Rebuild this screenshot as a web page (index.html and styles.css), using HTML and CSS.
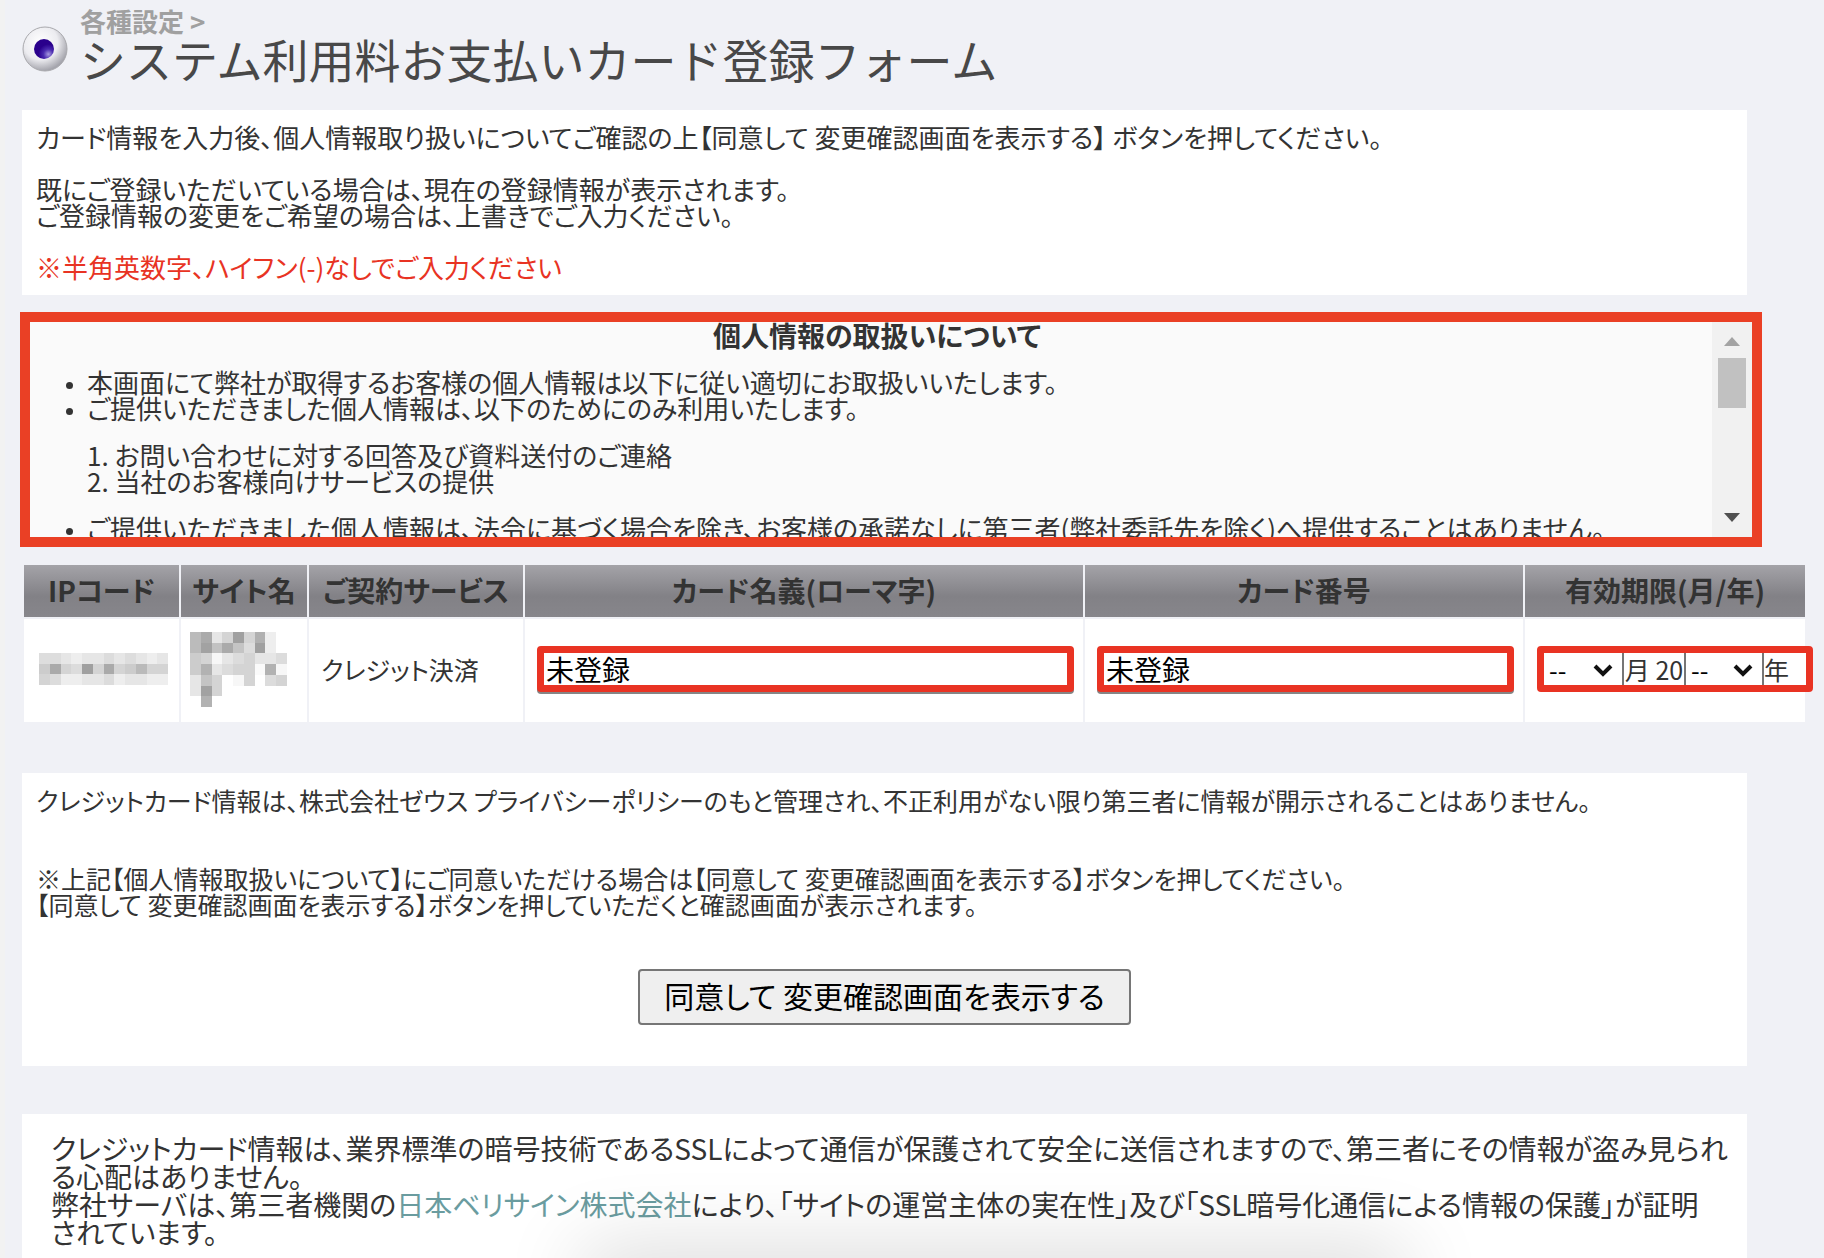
FILE: index.html
```html
<!DOCTYPE html>
<html lang="ja">
<head>
  <meta charset="UTF-8">
  <meta name="viewport" content="width=device-width, initial-scale=1.0">
  <title>システム利用料お支払いカード登録フォーム</title>
  <link rel="stylesheet" href="styles.css">
</head>
<body>
  <header class="page-header">
    <svg class="page-icon" viewBox="0 0 46 46" aria-hidden="true">
      <defs>
        <radialGradient id="ball" cx="40%" cy="35%" r="65%">
          <stop offset="0" stop-color="#ffffff"/>
          <stop offset="0.6" stop-color="#ececf0"/>
          <stop offset="1" stop-color="#a4a4ac"/>
        </radialGradient>
        <radialGradient id="pupil" cx="72%" cy="76%" r="50%">
          <stop offset="0" stop-color="#a89ae0"/>
          <stop offset="0.5" stop-color="#4a2ab0"/>
          <stop offset="1" stop-color="#2a008c"/>
        </radialGradient>
      </defs>
      <circle cx="23" cy="23" r="22" fill="url(#ball)" stroke="#a9a9ad"/>
      <circle cx="22" cy="23" r="10" fill="url(#pupil)"/>
    </svg>
    <div>
      <p class="breadcrumb">各種設定 &gt;</p>
      <h1>システム利用料お支払いカード登録フォーム</h1>
    </div>
  </header>

  <form>
    <section class="panel">
      カード情報を入力後、個人情報取り扱いについてご確認の上【同意して 変更確認画面を表示する】 ボタンを押してください。<br>
      <br>
      既にご登録いただいている場合は、現在の登録情報が表示されます。<br>
      ご登録情報の変更をご希望の場合は、上書きでご入力ください。<br>
      <br>
      <span class="notice">※半角英数字、ハイフン(-)なしでご入力ください</span>
    </section>

    <section class="policy">
      <div class="policy-text">
        <h2>個人情報の取扱いについて</h2>
        <ul>
          <li>本画面にて弊社が取得するお客様の個人情報は以下に従い適切にお取扱いいたします。</li>
          <li>ご提供いただきました個人情報は、以下のためにのみ利用いたします。
            <ol>
              <li>お問い合わせに対する回答及び資料送付のご連絡</li>
              <li>当社のお客様向けサービスの提供</li>
            </ol>
          </li>
          <li>ご提供いただきました個人情報は、法令に基づく場合を除き、お客様の承諾なしに第三者(弊社委託先を除く)へ提供することはありません。</li>
        </ul>
      </div>
      <div class="scrollbar" aria-hidden="true">
        <span class="arrow-up"></span>
        <span class="thumb"></span>
        <span class="arrow-down"></span>
      </div>
    </section>

    <table class="cards">
      <thead>
        <tr>
          <th class="col-ip">IPコード</th>
          <th class="col-site">サイト名</th>
          <th class="col-service">ご契約サービス</th>
          <th><label for="holder">カード名義(ローマ字)</label></th>
          <th class="col-number"><label for="number">カード番号</label></th>
          <th class="col-expiry">有効期限(月/年)</th>
        </tr>
      </thead>
      <tbody>
        <tr>
          <td><svg class="mosaic mosaic-ip" id="mosaic-ip" viewBox="0 0 12 3" preserveAspectRatio="none"></svg></td>
          <td><svg class="mosaic mosaic-site" id="mosaic-site" viewBox="0 0 9 7" preserveAspectRatio="none"></svg></td>
          <td>クレジット決済</td>
          <td><input class="marked" type="text" id="holder" value="未登録"></td>
          <td><input class="marked" type="text" id="number" value="未登録"></td>
          <td>
            <div class="marked expiry">
              <div class="select">
                <select aria-label="月"><option>--</option></select>
                <svg viewBox="0 0 22 14" aria-hidden="true"><path d="M3 3l8 8 8-8"/></svg>
              </div>
              <span class="month">月 20</span>
              <div class="select">
                <select aria-label="年"><option>--</option></select>
                <svg viewBox="0 0 22 14" aria-hidden="true"><path d="M3 3l8 8 8-8"/></svg>
              </div>
              <span>年</span>
            </div>
          </td>
        </tr>
      </tbody>
    </table>

    <section class="panel confirm">
      クレジットカード情報は、株式会社ゼウス プライバシーポリシーのもと管理され、不正利用がない限り第三者に情報が開示されることはありません。<br>
      <br>
      <br>
      ※上記【個人情報取扱いについて】にご同意いただける場合は【同意して 変更確認画面を表示する】ボタンを押してください。<br>
      【同意して 変更確認画面を表示する】ボタンを押していただくと確認画面が表示されます。
      <div class="actions">
        <button type="submit">同意して 変更確認画面を表示する</button>
      </div>
    </section>
  </form>

  <section class="panel ssl">
    クレジットカード情報は、業界標準の暗号技術であるSSLによって通信が保護されて安全に送信されますので、第三者にその情報が盗み見られる心配はありません。<br>
    弊社サーバは、第三者機関の<a href="#">日本ベリサイン株式会社</a>により、「サイトの運営主体の実在性」及び「SSL暗号化通信による情報の保護」が証明<span class="nowrap">されています。</span>
  </section>

  <div class="bottom-shadow"></div>

  <script>
    // grey levels of the masked cells, "--" is left empty
    const masks = {
      'mosaic-ip': [
        'dd dd e6 ee e6 e6 dc e6 dd e6 ee e6',
        'cc aa d4 dc a0 d4 aa d4 cc ba d4 d4',
        'd4 dc ee ee e6 e6 dc ee e6 e6 ee ee',
      ],
      'mosaic-site': [
        'bb aa e6 d4 a0 d4 b0 ee --',
        'bb a2 c2 aa c4 dc a0 ee --',
        'cc d4 f7 e6 dc d4 e6 e6 dc',
        'cc b2 e6 dc d4 d4 fa b2 f7',
        'e6 c4 d4 -- f7 d4 -- dc d4',
        'e6 a2 d4 -- -- -- -- -- --',
        '-- b2 -- -- -- -- -- -- --',
      ],
    };

    for (const id in masks) {
      let cells = '';
      masks[id].forEach((row, y) => {
        row.split(' ').forEach((c, x) => {
          if (c !== '--') {
            cells += `<rect x="${x}" y="${y}" width="1" height="1" fill="#${c}${c}${c}"/>`;
          }
        });
      });
      document.getElementById(id).innerHTML = cells;
    }
  </script>
</body>
</html>
```
FILE: styles.css
```css
* {
  box-sizing: border-box;
}

body {
  margin: 0;
  padding: 8px 17px 0 17px;
  border-left: 5px solid #f2f2f2;
  min-height: 100vh;
  display: flex;
  flex-direction: column;
  overflow: hidden;
  background-color: #f0f1f6;
  color: #333;
  font-family: "Noto Sans CJK JP", sans-serif;
  font-feature-settings: "palt";
  font-size: 26px;
  line-height: 26px;
}

.page-header {
  display: flex;
  gap: 12px;
  height: 102px;
}

.page-icon {
  width: 46px;
  height: 46px;
  margin-top: 18px;
}

.breadcrumb {
  margin: 0;
  color: #a0a0a0;
  font-weight: bold;
}

h1 {
  margin: 0;
  color: #484848;
  font-size: 46px;
  font-weight: 400;
  line-height: 48px;
  font-feature-settings: normal;
}

.panel {
  margin-right: 60px;
  padding: 14px 14px 15px;
  background-color: #fff;
}

.notice {
  color: #e83323;
}

.policy {
  display: flex;
  height: 235px;
  margin: 17px 45px 16px -2px;
  border: 10px solid #ea4025;
  background-color: #fafafa;
}

.policy-text {
  flex: 1;
  overflow: hidden;
}

.policy h2 {
  margin: 0 0 21px;
  padding-left: 12px;
  font-size: 28px;
  line-height: 26px;
  text-align: center;
}

.policy ul {
  margin: 0;
  padding-left: 57px;
}

.policy ul > li::marker {
  font-size: 18px;
}

.policy ol {
  margin: 21px 0;
  padding-left: 0;
  list-style-position: inside;
}

.policy ol > li::marker {
  font-size: 26px;
}

.scrollbar {
  display: flex;
  flex-direction: column;
  align-items: center;
  width: 40px;
  padding: 15px 0;
  background-color: #f1f1f1;
}

.arrow-up {
  border: 8px solid transparent;
  border-top: 0;
  border-bottom: 9px solid #a3a3a3;
}

.thumb {
  width: 28px;
  height: 50px;
  margin: 12px 0 auto;
  background-color: #c1c1c1;
}

.arrow-down {
  border: 8px solid transparent;
  border-bottom: 0;
  border-top: 9px solid #505050;
}

.cards {
  width: 100%;
  table-layout: fixed;
  border-spacing: 2px;
  margin-bottom: 49px;
}

.cards th {
  height: 52px;
  padding: 0 0 2px;
  background: linear-gradient(#a4a3a8, #828186 60%, #87868b);
  font-size: 28px;
}

.cards td {
  height: 103px;
  padding: 0 12px 3px;
  background-color: #fff;
  font-size: 25px;
}

.col-ip {
  width: 155px;
}

.col-site {
  width: 126px;
}

.col-service {
  width: 214px;
}

.col-number {
  width: 438px;
}

.col-expiry {
  width: 280px;
}

.mosaic {
  display: block;
  shape-rendering: crispEdges;
}

.mosaic-ip {
  width: 129px;
  height: 32px;
  margin-left: 3px;
}

.mosaic-site {
  width: 97px;
  height: 75px;
  margin-left: -3px;
}

.marked {
  display: block;
  height: 46px;
  border: 7px solid #e93323;
  border-radius: 4px;
  background-color: #fff;
}

input.marked {
  width: calc(100% + 3px);
  padding: 0 2px;
  color: #000;
  font: inherit;
  font-size: 28px;
  box-shadow: 0 2px 0 #858585;
}

.expiry {
  display: flex;
  align-items: center;
  width: 276px;
  white-space: nowrap;
}

.select {
  position: relative;
}

.select select {
  display: block;
  width: 80px;
  height: 32px;
  padding: 0 5px;
  border: 0 solid #767676;
  border-right-width: 2px;
  border-radius: 0;
  appearance: none;
  background-color: #fff;
  color: #000;
  font: inherit;
}

.month + .select select {
  border-left-width: 2px;
}

.select svg {
  position: absolute;
  top: 10px;
  right: 10px;
  width: 22px;
  height: 14px;
  fill: none;
  stroke: #111;
  stroke-width: 4;
  pointer-events: none;
}

.month {
  width: 60px;
  text-align: center;
}

.confirm {
  font-size: 25px;
}

.actions {
  padding: 52px 0 26px;
  text-align: center;
}

button {
  height: 56px;
  padding: 0 24px 4px;
  border: 2px solid #767676;
  border-radius: 4px;
  background-color: #efefef;
  color: #000;
  font: inherit;
  font-size: 30px;
}

.ssl {
  flex: 1;
  margin-top: 48px;
  padding: 20px 14px 10px 29px;
  font-size: 28px;
  line-height: 28px;
}

.nowrap {
  display: inline-block;
}

a {
  color: #6a9c9f;
  text-decoration: none;
}

/* soft shade rising from the bottom edge */
.bottom-shadow {
  position: fixed;
  left: 33%;
  right: 24%;
  bottom: -40px;
  height: 30px;
  box-shadow: 0 0 80px 20px rgba(0, 0, 0, 0.15);
}
```
